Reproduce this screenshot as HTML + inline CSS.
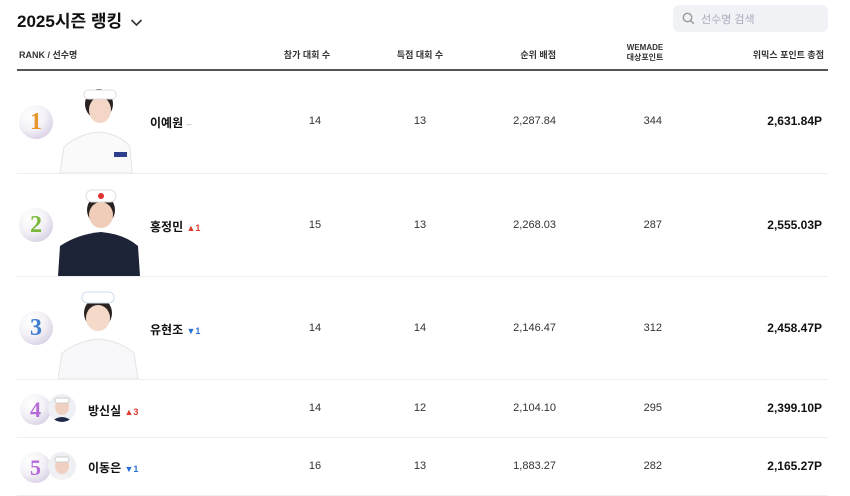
<!DOCTYPE html>
<html><head><meta charset="utf-8"><style>
*{margin:0;padding:0;box-sizing:border-box}
body{width:850px;height:496px;background:#fff;font-family:"Liberation Sans","Noto Sans CJK KR",sans-serif;color:#222;position:relative;overflow:hidden}
.a{position:absolute}
.title{left:17px;top:7px;font-size:17px;font-weight:bold;color:#111}
.search{left:673px;top:5px;width:155px;height:27px;background:#f1f2f6;border-radius:6px}
.search span{position:absolute;left:28px;top:6px;font-size:11px;color:#aab}
.hd{font-size:9px;font-weight:bold;color:#333;top:48px}
.line{left:17px;width:811px;height:1px;background:#eee}
.c{text-align:center;width:80px;font-size:11px;color:#333}
.r{text-align:right;font-size:11px;color:#333}
.tot{font-size:12px;font-weight:bold;color:#111;text-align:right;right:28px}
.ball{border-radius:50%;background:radial-gradient(circle at 35% 30%,#fff 0,#f3f1f6 45%,#d8d0e4 80%,#c2b7d6 100%);text-align:center;font-weight:bold;font-family:"Liberation Serif",serif}
.name{font-size:12px;font-weight:bold;color:#111}
.up{color:#e03a2e;font-size:9px;font-weight:bold}
.dn{color:#2a6fd8;font-size:9px;font-weight:bold}
</style></head><body>
<div class="a title">2025시즌 랭킹 <svg width="13" height="9" viewBox="0 0 13 9" style="margin-left:3px"><path d="M1.5 2l5 5 5-5" stroke="#333" stroke-width="1.6" fill="none"/></svg></div>
<div class="a search"><svg class="a" style="left:9px;top:7px" width="13" height="13" viewBox="0 0 13 13"><circle cx="5.5" cy="5.5" r="4.2" stroke="#999" stroke-width="1.4" fill="none"/><path d="M8.6 8.6l3.2 3.2" stroke="#999" stroke-width="1.4"/></svg><span>선수명 검색</span></div>
<div class="a hd" style="left:19px">RANK / 선수명</div>
<div class="a hd" style="left:267px;width:80px;text-align:center">참가 대회 수</div>
<div class="a hd" style="left:380px;width:80px;text-align:center">득점 대회 수</div>
<div class="a hd" style="left:476px;width:80px;text-align:right">순위 배점</div>
<div class="a hd" style="left:605px;width:80px;text-align:center;top:43px;font-size:8px;line-height:10px">WEMADE<br>대상포인트</div>
<div class="a hd" style="right:26px">위믹스 포인트 총점</div>
<div class="a line" style="top:69px;height:2px;background:#555"></div>

<!-- rows -->
<div class="a line" style="top:173px"></div>
<div class="a line" style="top:276px"></div>
<div class="a line" style="top:379px"></div>
<div class="a line" style="top:437px"></div>
<div class="a line" style="top:495px"></div>

<!-- big rows -->
<div class="a ball" style="left:19px;top:105px;width:34px;height:34px;font-size:24px;line-height:34px;color:#e7962e">1</div>
<div class="a ball" style="left:19px;top:208px;width:34px;height:34px;font-size:24px;line-height:34px;color:#7cb83b">2</div>
<div class="a ball" style="left:19px;top:311px;width:34px;height:34px;font-size:24px;line-height:34px;color:#3f7fd1">3</div>

<!-- photos -->
<svg class="a" style="left:58px;top:82px" width="82" height="91" viewBox="0 0 82 91"><ellipse cx="41" cy="22" rx="14" ry="15" fill="#2a2220"/><ellipse cx="42" cy="28" rx="11" ry="13" fill="#f3d6c6"/><rect x="26" y="8" width="32" height="9" rx="4" fill="#fff" stroke="#ddd"/><path d="M2 91 L6 65 Q20 52 41 50 Q62 52 72 65 L74 91Z" fill="#fafafa" stroke="#e4e4e4"/><rect x="56" y="70" width="13" height="5" fill="#2c3e8c"/></svg>
<svg class="a" style="left:58px;top:184px" width="82" height="92" viewBox="0 0 82 92"><ellipse cx="43" cy="26" rx="14" ry="15" fill="#2a2220"/><ellipse cx="43" cy="31" rx="12" ry="13" fill="#efcdb8"/><rect x="28" y="6" width="30" height="12" rx="6" fill="#fff" stroke="#ddd"/><circle cx="43" cy="12" r="3" fill="#d33"/><path d="M0 92 L2 62 Q20 50 43 48 Q66 50 80 62 L82 92Z" fill="#1d2438"/></svg>
<svg class="a" style="left:58px;top:287px" width="82" height="92" viewBox="0 0 82 92"><ellipse cx="40" cy="26" rx="14" ry="15" fill="#2a2220"/><ellipse cx="40" cy="31" rx="12" ry="13" fill="#f5d9c9"/><rect x="24" y="5" width="32" height="11" rx="5" fill="#fff" stroke="#cde"/><path d="M0 92 L4 66 Q20 54 40 52 Q62 54 76 66 L80 92Z" fill="#f8f8fa" stroke="#e4e4e4"/></svg>

<div class="a name" style="left:150px;top:114px">이예원 <span style="color:#aaa;font-weight:normal;font-size:9px">–</span></div>
<div class="a name" style="left:150px;top:218px">홍정민 <span class="up">▲1</span></div>
<div class="a name" style="left:150px;top:321px">유현조 <span class="dn">▼1</span></div>

<!-- small rows -->
<div class="a ball" style="left:20px;top:394px;width:31px;height:31px;font-size:22px;line-height:31px;color:#b56bd8">4</div>
<div class="a" style="left:48px;top:394px;width:28px;height:28px;border-radius:50%;background:#eef0f4;overflow:hidden"><svg width="28" height="28"><ellipse cx="14" cy="13" rx="7" ry="8" fill="#f0d0c0"/><rect x="7" y="4" width="14" height="5" rx="2" fill="#fff" stroke="#ccc"/><path d="M3 28 Q14 18 25 28Z" fill="#1f2a4a"/></svg></div>
<div class="a ball" style="left:20px;top:452px;width:31px;height:31px;font-size:22px;line-height:31px;color:#b56bd8">5</div>
<div class="a" style="left:48px;top:452px;width:28px;height:28px;border-radius:50%;background:#eef0f4;overflow:hidden"><svg width="28" height="28"><ellipse cx="14" cy="14" rx="7" ry="8" fill="#f0d0c0"/><rect x="7" y="5" width="14" height="5" rx="2" fill="#fff" stroke="#ccc"/><path d="M3 28 Q14 20 25 28Z" fill="#f4f4f4"/></svg></div>
<div class="a name" style="left:88px;top:402px">방신실 <span class="up">▲3</span></div>
<div class="a name" style="left:88px;top:459px">이동은 <span class="dn">▼1</span></div>

<!-- numbers -->
<div class="a c" style="left:275px;top:115px">14</div><div class="a c" style="left:380px;top:115px">13</div><div class="a r" style="left:476px;width:80px;top:115px">2,287.84</div><div class="a r" style="left:582px;width:80px;top:115px">344</div><div class="a tot" style="top:114px">2,631.84P</div>
<div class="a c" style="left:275px;top:219px">15</div><div class="a c" style="left:380px;top:219px">13</div><div class="a r" style="left:476px;width:80px;top:219px">2,268.03</div><div class="a r" style="left:582px;width:80px;top:219px">287</div><div class="a tot" style="top:218px">2,555.03P</div>
<div class="a c" style="left:275px;top:322px">14</div><div class="a c" style="left:380px;top:322px">14</div><div class="a r" style="left:476px;width:80px;top:322px">2,146.47</div><div class="a r" style="left:582px;width:80px;top:322px">312</div><div class="a tot" style="top:321px">2,458.47P</div>
<div class="a c" style="left:275px;top:402px">14</div><div class="a c" style="left:380px;top:402px">12</div><div class="a r" style="left:476px;width:80px;top:402px">2,104.10</div><div class="a r" style="left:582px;width:80px;top:402px">295</div><div class="a tot" style="top:401px">2,399.10P</div>
<div class="a c" style="left:275px;top:460px">16</div><div class="a c" style="left:380px;top:460px">13</div><div class="a r" style="left:476px;width:80px;top:460px">1,883.27</div><div class="a r" style="left:582px;width:80px;top:460px">282</div><div class="a tot" style="top:459px">2,165.27P</div>
</body></html>
